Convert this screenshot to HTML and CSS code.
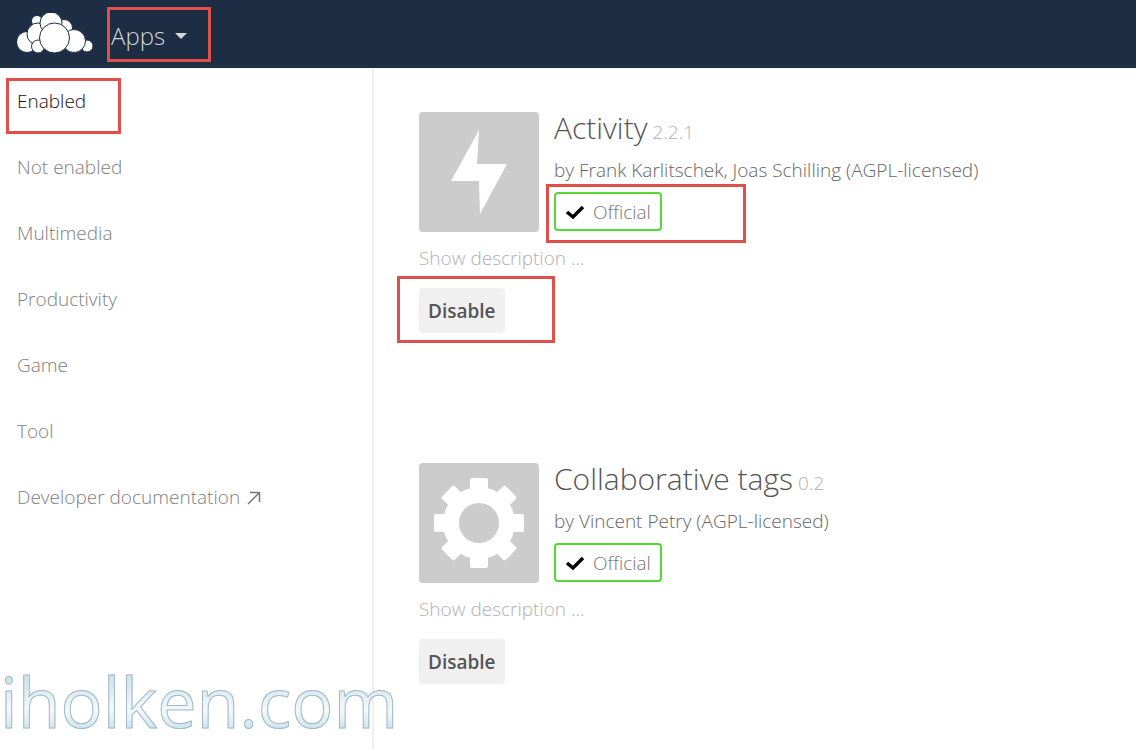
FILE: index.html
```html
<!DOCTYPE html>
<html lang="en">
<head>
  <meta charset="UTF-8" />
  <meta name="viewport" content="width=device-width, initial-scale=1.0"/>
  <title>Apps - ownCloud</title>
  <link rel="stylesheet" href="styles.css">
</head>
<body>

  <header>
    <a class="logo" href="#" aria-label="ownCloud">
      <svg width="76" height="42" viewBox="0 0 76 42">
        <g fill="#fff" stroke="#1d2d44" stroke-width="1">
          <circle cx="20" cy="8" r="5.500"/>
          <circle cx="47" cy="15" r="8.500"/>
          <circle cx="10" cy="29" r="10.500"/>
          <circle cx="21" cy="21" r="11"/>
          <circle cx="34" cy="10" r="11"/>
          <circle cx="21" cy="33.500" r="6.500"/>
          <circle cx="70" cy="33" r="6"/>
          <circle cx="57" cy="28" r="11.500"/>
          <circle cx="37.500" cy="25" r="15"/>
        </g>
      </svg>
    </a>
    <button class="app-menu">
      Apps
      <svg width="12" height="6" viewBox="0 0 12 6"><path d="M0 0h12L6 6z" fill="#d2d5da"/></svg>
      <span class="mark mark-menu"></span>
    </button>
  </header>

  <main>
    <nav>
      <a class="active" href="#">Enabled<span class="mark mark-enabled"></span></a>
      <a href="#">Not enabled</a>
      <a href="#">Multimedia</a>
      <a href="#">Productivity</a>
      <a href="#">Game</a>
      <a href="#">Tool</a>
      <a href="#">Developer documentation
        <svg width="14" height="14" viewBox="0 0 14 14"><path d="M1 13L12 2M3 1.5h9.500v9.500" fill="none" stroke="#777" stroke-width="1.500"/></svg>
      </a>
    </nav>

    <div class="apps">
      <!-- Activity -->
      <section class="app">
        <div class="app-head">
          <svg class="app-icon" width="120" height="120" viewBox="0 0 120 120">
            <path d="M60 18L32 69h28l1 33 27-50H58z" fill="#fff"/>
          </svg>
          <div class="app-info">
            <h2>Activity <small>2.2.1</small></h2>
            <p>by Frank Karlitschek, Joas Schilling (AGPL-licensed)</p>
            <span class="official">
              <svg width="20" height="16" viewBox="0 0 20 16"><path d="M2 8l6 5L18 3" fill="none" stroke="#000" stroke-width="3.500"/></svg>
              Official
              <span class="mark mark-official"></span>
            </span>
          </div>
        </div>
        <a class="show" href="#">Show description ...</a>
        <button class="disable">Disable<span class="mark mark-disable"></span></button>
      </section>

      <!-- Collaborative tags -->
      <section class="app">
        <div class="app-head">
          <svg class="app-icon" width="120" height="120" viewBox="0 0 120 120">
            <g fill="#fff">
              <rect x="51" y="15" width="18" height="90" rx="2"/>
              <rect x="51" y="15" width="18" height="90" rx="2" transform="rotate(45 60 60)"/>
              <rect x="51" y="15" width="18" height="90" rx="2" transform="rotate(90 60 60)"/>
              <rect x="51" y="15" width="18" height="90" rx="2" transform="rotate(135 60 60)"/>
              <circle cx="60" cy="60" r="36"/>
            </g>
            <circle cx="60" cy="60" r="20" fill="#ccc"/>
          </svg>
          <div class="app-info">
            <h2>Collaborative tags <small>0.2</small></h2>
            <p>by Vincent Petry (AGPL-licensed)</p>
            <span class="official">
              <svg width="20" height="16" viewBox="0 0 20 16"><path d="M2 8l6 5L18 3" fill="none" stroke="#000" stroke-width="3.500"/></svg>
              Official
            </span>
          </div>
        </div>
        <a class="show" href="#">Show description ...</a>
        <button class="disable">Disable</button>
      </section>
    </div>
  </main>

  <div class="watermark">iholken.com</div>

</body>
</html>
```
FILE: styles.css
```css
* {
  box-sizing: border-box;
}
body {
  margin: 0;
  min-height: 100vh;
  display: flex;
  flex-direction: column;
  font-family: "Open Sans", sans-serif;
  font-size: 19px;
  font-weight: 300;
  line-height: 28px;
  color: #555;
  background: #fff;
}
a {
  color: inherit;
  text-decoration: none;
}
button {
  position: relative;
  border: none;
  font-family: inherit;
  cursor: pointer;
}
header {
  display: flex;
  align-items: center;
  height: 68px;
  padding: 0 17px;
  background: #1d2d44;
}
.logo {
  height: 42px;
}
.logo svg {
  display: block;
}
.app-menu {
  display: flex;
  align-items: center;
  gap: 10px;
  margin-left: 18px;
  padding: 4px 0 0;
  background: none;
  color: #d2d5da;
  font-size: 24px;
  font-weight: 300;
  line-height: 32px;
}
main {
  display: flex;
  flex: 1;
}
nav {
  flex: 0 0 374px;
  border-right: 2px solid #f0f0f0;
}
nav a {
  position: relative;
  display: block;
  padding: 0 17px;
  line-height: 66px;
  color: #808080;
}
nav .active {
  color: #111;
}
nav svg {
  margin-left: 2px;
  vertical-align: -1px;
}
.apps {
  flex: 1;
  padding: 44px 45px 0;
}
.app {
  margin-bottom: 130px;
}
.app:last-child {
  margin-bottom: 0;
}
.app-head {
  display: flex;
  gap: 15px;
}
.app-icon {
  flex: none;
  border-radius: 4px;
  background: #ccc;
}
h2 {
  display: flex;
  align-items: baseline;
  gap: 5px;
  margin: 0 0 8px;
  font-size: 30px;
  font-weight: 300;
  line-height: 32px;
}
h2 small {
  font-size: 19px;
  color: #b0b0b0;
}
.app-info p {
  margin: 0 0 8px;
  color: #666;
}
.official {
  position: relative;
  display: inline-flex;
  align-items: center;
  gap: 8px;
  height: 39px;
  padding: 0 9px;
  border: 2px solid #55d834;
  border-radius: 4px;
  color: #777;
}
.show {
  display: block;
  margin: 12px 0 16px;
  color: #b0b0b0;
}
.disable {
  height: 45px;
  padding: 0 9px;
  border-radius: 4px;
  background: #f0f0f0;
  color: #555;
  font-size: 19px;
  font-weight: 600;
}

/* red callouts */
.mark {
  position: absolute;
  border: 3px solid #df504b;
  pointer-events: none;
}
.mark-menu {
  top: -9px;
  left: -4px;
  width: 104px;
  height: 55px;
}
.mark-enabled {
  top: 10px;
  left: 6px;
  width: 115px;
  height: 56px;
}
.mark-official {
  top: -10px;
  left: -10px;
  width: 200px;
  height: 59px;
}
.mark-disable {
  top: -12px;
  left: -22px;
  width: 158px;
  height: 67px;
}
.watermark {
  position: absolute;
  left: 0;
  bottom: 3px;
  font-size: 70px;
  font-weight: 500;
  line-height: 92px;
  color: transparent;
  background: linear-gradient(#d3e6f0 30%, #f4f9fc 60%, #cfe4ef 80%);
  -webkit-background-clip: text;
  background-clip: text;
  -webkit-text-stroke: 1px #a3b9c5;
  pointer-events: none;
}
```
